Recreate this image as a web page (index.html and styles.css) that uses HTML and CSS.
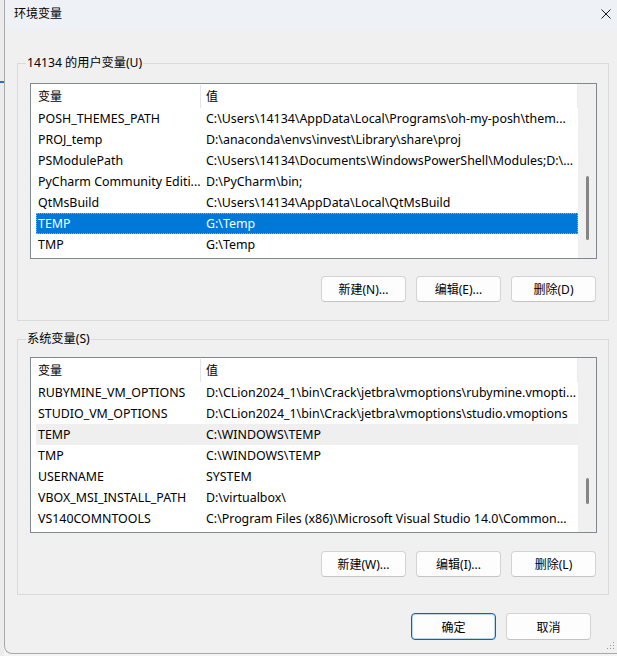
FILE: index.html
```html
<!DOCTYPE html>
<html lang="zh-CN">
<head>
<meta charset="utf-8">
<title>环境变量</title>
<link rel="stylesheet" href="styles.css">
</head>
<body>
<div class="screen">
  <div class="behind"><div class="behind-mark"></div></div>
  <div class="dialog">
    <div class="titlebar">
      <span class="title">环境变量</span>
      <svg class="close" width="10" height="10" viewBox="0 0 10 10"><path d="M0.5 0.5 L9.5 9.5 M9.5 0.5 L0.5 9.5" stroke="#1a1a1a" stroke-width="1" fill="none"/></svg>
    </div>
    <div class="content">
      <fieldset class="group group-user">
        <legend>14134 的用户变量(U)</legend>
        <div class="list">
          <div class="list-main">
            <div class="head"><div class="hc1">变量</div><div class="hc2">值</div></div>
            <div class="row"><div class="c1">POSH_THEMES_PATH</div><div class="c2">C:\Users\14134\AppData\Local\Programs\oh-my-posh\them...</div></div>
            <div class="row"><div class="c1">PROJ_temp</div><div class="c2">D:\anaconda\envs\invest\Library\share\proj</div></div>
            <div class="row"><div class="c1">PSModulePath</div><div class="c2">C:\Users\14134\Documents\WindowsPowerShell\Modules;D:\...</div></div>
            <div class="row"><div class="c1">PyCharm Community Editi...</div><div class="c2">D:\PyCharm\bin;</div></div>
            <div class="row"><div class="c1">QtMsBuild</div><div class="c2">C:\Users\14134\AppData\Local\QtMsBuild</div></div>
            <div class="row selected"><div class="c1">TEMP</div><div class="c2">G:\Temp</div></div>
            <div class="row"><div class="c1">TMP</div><div class="c2">G:\Temp</div></div>
          </div>
          <div class="scroll"><div class="thumb thumb-user"></div></div>
        </div>
        <div class="buttons">
          <button class="btn">新建(N)...</button>
          <button class="btn">编辑(E)...</button>
          <button class="btn">删除(D)</button>
        </div>
      </fieldset>
      <fieldset class="group group-sys">
        <legend>系统变量(S)</legend>
        <div class="list">
          <div class="list-main">
            <div class="head"><div class="hc1">变量</div><div class="hc2">值</div></div>
            <div class="row"><div class="c1">RUBYMINE_VM_OPTIONS</div><div class="c2">D:\CLion2024_1\bin\Crack\jetbra\vmoptions\rubymine.vmopti...</div></div>
            <div class="row"><div class="c1">STUDIO_VM_OPTIONS</div><div class="c2">D:\CLion2024_1\bin\Crack\jetbra\vmoptions\studio.vmoptions</div></div>
            <div class="row hover"><div class="c1">TEMP</div><div class="c2">C:\WINDOWS\TEMP</div></div>
            <div class="row"><div class="c1">TMP</div><div class="c2">C:\WINDOWS\TEMP</div></div>
            <div class="row"><div class="c1">USERNAME</div><div class="c2">SYSTEM</div></div>
            <div class="row"><div class="c1">VBOX_MSI_INSTALL_PATH</div><div class="c2">D:\virtualbox\</div></div>
            <div class="row"><div class="c1">VS140COMNTOOLS</div><div class="c2">C:\Program Files (x86)\Microsoft Visual Studio 14.0\Common...</div></div>
          </div>
          <div class="scroll"><div class="thumb thumb-sys"></div></div>
        </div>
        <div class="buttons">
          <button class="btn">新建(W)...</button>
          <button class="btn">编辑(I)...</button>
          <button class="btn">删除(L)</button>
        </div>
      </fieldset>
      <div class="footer">
        <button class="btn btn-default">确定</button>
        <button class="btn">取消</button>
      </div>
    </div>
    <svg class="grip" width="10" height="10" viewBox="0 0 10 10">
      <rect x="8" y="0" width="1" height="1" fill="#9a9a9a"/>
      <rect x="5" y="3" width="1" height="1" fill="#9a9a9a"/>
      <rect x="8" y="3" width="1" height="1" fill="#9a9a9a"/>
      <rect x="2" y="6" width="1" height="1" fill="#9a9a9a"/>
      <rect x="5" y="6" width="1" height="1" fill="#9a9a9a"/>
      <rect x="8" y="6" width="1" height="1" fill="#9a9a9a"/>
    </svg>
  </div>
</div>
</body>
</html>
```
FILE: styles.css
```css
* { box-sizing: border-box; }
html, body { margin: 0; padding: 0; }
body {
  background: #f4f4f4;
  font-family: "Noto Sans", "Noto Sans CJK SC", sans-serif;
  font-size: 12px;
  color: #000;
}
.screen {
  display: flex;
  width: 617px;
  height: 656px;
  overflow: hidden;
}
.behind {
  width: 4px;
  flex: none;
  background: #ececec;
}
.behind-mark {
  margin-top: 81px;
  height: 2px;
  background: #2a6fc4;
}
.dialog {
  position: relative;
  flex: 1;
  height: 654px;
  background: #f0f0f0;
  border-left: 1px solid #a9a9a9;
  border-bottom: 1px solid #a9a9a9;
  border-bottom-left-radius: 8px;
}
.titlebar {
  height: 30px;
  background: #eef2f7;
  display: flex;
  align-items: center;
  justify-content: space-between;
  padding: 0 6px 0 9px;
}
.title { font-size: 12px; line-height: 16px; margin-top: -2px; }
.close { margin-top: -2px; }
.content { padding-left: 12px; }
.group {
  width: 592px;
  min-width: 0;
  margin: 0;
  border: 1px solid #dadada;
}
.group legend {
  margin-left: -4px;
  padding: 0 1px;
  line-height: 16px;
  font-size: 12.2px;
}
.group-user { margin-top: 25px; padding: 12px 11px 18px 12px; }
.group-sys { margin-top: 10px; padding: 10px 11px 17px 12px; }
.group-sys .buttons { margin-top: 18px; }
.list {
  display: flex;
  width: 567px;
  height: 176px;
  border: 1px solid #828790;
  background: #fff;
  overflow: hidden;
}
.list-main { flex: 1; min-width: 0; overflow: hidden; }
.head {
  display: flex;
  height: 24px;
  line-height: 23px;
  border-right: 1px solid #ececec;
}
.hc1 {
  width: 170px;
  padding-left: 7px;
  border-right: 1px solid #e5e5e5;
  margin: 1px 0 0;
}
.hc2 { padding-left: 5px; margin-top: 1px; }
.row {
  display: flex;
  height: 21px;
  line-height: 22px;
  margin-left: 5px;
  white-space: nowrap;
  font-size: 12.4px;
}
.c1 { width: 170px; flex: none; padding-left: 2px; overflow: hidden; }
.c2 { flex: 1; overflow: hidden; }
.row.selected {
  background: #0078d7;
  color: #fff;
  outline: 1px dotted #f29b38;
  outline-offset: -1px;
}
.row.hover { background: #efefef; }
.scroll {
  width: 18px;
  flex: none;
  background: #f0f0f0;
  padding-left: 8px;
}
.thumb {
  width: 3px;
  background: #858585;
  border-radius: 2px;
}
.thumb-user { margin-top: 92px; height: 64px; }
.thumb-sys { margin-top: 120px; height: 26px; }
.buttons {
  display: flex;
  justify-content: flex-end;
  gap: 10px;
  margin-top: 17px;
  padding-right: 1px;
}
.btn {
  width: 85px;
  height: 26px;
  padding: 0;
  background: #fdfdfd;
  border: 1px solid #d3d3d3;
  border-bottom-color: #c4c4c4;
  border-radius: 4px;
  font-family: "Noto Sans", "Noto Sans CJK SC", sans-serif;
  font-size: 12px;
  color: #000;
}
.footer {
  display: flex;
  justify-content: flex-end;
  gap: 10px;
  margin-top: 18px;
  padding-right: 26px;
}
.footer .btn { height: 27px; }
.btn-default {
  border: 1px solid #0067c0;
  box-shadow: inset 0 0 0 1px rgba(0, 103, 192, 0.25);
}
.grip {
  position: absolute;
  right: 2px;
  bottom: 1px;
}
```
